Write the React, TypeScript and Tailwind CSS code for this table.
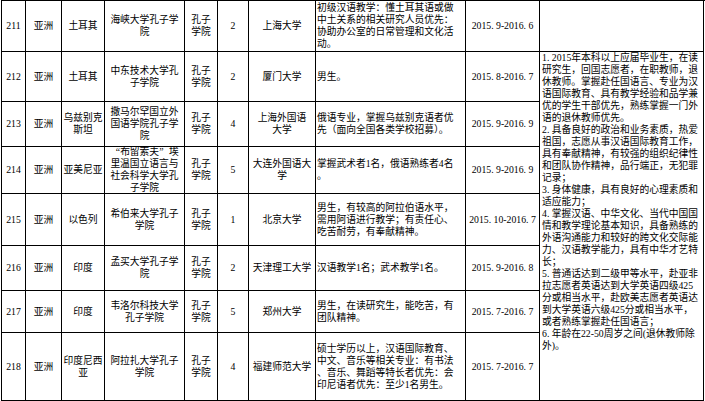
import React from "react";

type Row = {
  no: string;
  country: string;
  inst: React.ReactNode;
  n: string;
  uni: string;
  desc: string;
  date: string;
};

const Q = ({ c, right }: { c: string; right?: boolean }) => (
  <span className={right ? "inline-block w-[9.75px] text-right" : "inline-block w-[9.75px] text-left"}>{c}</span>
);

const rows: Row[] = [
  {
    no: "211",
    country: "土耳其",
    inst: "海峡大学孔子学\n院",
    n: "2",
    uni: "上海大学",
    desc: "初级汉语教学：懂土耳其语或做\n中土关系的相关研究人员优先：\n协助办公室的日常管理和文化活\n动。",
    date: "2015. 9-2016. 6",
  },
  {
    no: "212",
    country: "土耳其",
    inst: "中东技术大学孔\n子学院",
    n: "2",
    uni: "厦门大学",
    desc: "男生。",
    date: "2015. 8-2016. 7",
  },
  {
    no: "213",
    country: "乌兹别克\n斯坦",
    inst: "撒马尔罕国立外\n国语学院孔子学\n院",
    n: "4",
    uni: "上海外国语\n大学",
    desc: "俄语专业，掌握乌兹别克语者优\n先（面向全国各类学校招募）。",
    date: "2015. 9-2016. 9",
  },
  {
    no: "214",
    country: "亚美尼亚",
    inst: (
      <>
        <Q c="“" right />
        布留索夫
        <Q c="”" />
        埃{"\n"}里温国立语言与{"\n"}社会科学大学孔{"\n"}子学院
      </>
    ),
    n: "5",
    uni: "大连外国语大\n学",
    desc: "掌握武术者1名，俄语熟练者4名\n。",
    date: "2015. 9-2016. 9",
  },
  {
    no: "215",
    country: "以色列",
    inst: "希伯来大学孔子\n学院",
    n: "1",
    uni: "北京大学",
    desc: "男生，有较高的阿拉伯语水平，\n需用阿语进行教学；有责任心、\n吃苦耐劳，有奉献精神。",
    date: "2015. 10-2016. 7",
  },
  {
    no: "216",
    country: "印度",
    inst: "孟买大学孔子学\n院",
    n: "2",
    uni: "天津理工大学",
    desc: "汉语教学1名；武术教学1名。",
    date: "2015. 9-2016. 8",
  },
  {
    no: "217",
    country: "印度",
    inst: "韦洛尔科技大学\n孔子学院",
    n: "5",
    uni: "郑州大学",
    desc: "男生，在读研究生，能吃苦，有\n团队精神。",
    date: "2015. 7-2016. 7",
  },
  {
    no: "218",
    country: "印度尼西\n亚",
    inst: "阿拉扎大学孔子\n学院",
    n: "4",
    uni: "福建师范大学",
    desc: "硕士学历以上，汉语国际教育、\n中文、音乐等相关专业：有书法\n、音乐、舞蹈等特长者优先：会\n印尼语者优先：至少1名男生。",
    date: "2015. 7-2016. 7",
  },
];

const req = [
  "1. 2015年本科以上应届毕业生，在读",
  "研究生，回国志愿者，在职教师，退",
  "休教师。掌握赴任国语言、专业为汉",
  "语国际教育、具有教学经验和品学兼",
  "优的学生干部优先，熟练掌握一门外",
  "语的退休教师优先。",
  "2. 具备良好的政治和业务素质，热爱",
  "祖国，志愿从事汉语国际教育工作，",
  "具有奉献精神，有较强的组织纪律性",
  "和团队协作精神，品行端正，无犯罪",
  "记录；",
  "3. 身体健康，具有良好的心理素质和",
  "适应能力；",
  "4. 掌握汉语、中华文化、当代中国国",
  "情和教学理论基本知识，具备熟练的",
  "外语沟通能力和较好的跨文化交际能",
  "力、汉语教学能力，具有中华才艺特",
  "长；",
  "5. 普通话达到二级甲等水平，赴亚非",
  "拉志愿者英语达到大学英语四级425",
  "分或相当水平，赴欧美志愿者英语达",
  "到大学英语六级425分或相当水平，",
  "或者熟练掌握赴任国语言；",
  "6. 年龄在22-50周岁之间(退休教师除",
  "外)。",
];

const center =
  "border-r border-b border-black flex items-center justify-center text-center overflow-hidden whitespace-pre leading-[12px]";
const left =
  "border-r border-b border-black flex items-center justify-start text-left overflow-hidden whitespace-pre leading-[12px] pl-[1px]";

export default function App() {
  return (
    <div className="w-[705px] h-[401px] bg-white overflow-hidden">
      <div
        className="ml-[1px] grid grid-cols-[24px_36px_43px_80px_33px_31px_67px_150px_74px_164px] grid-rows-[51px_50px_45px_47px_52px_45px_42px_68px] border-l border-t border-black text-black text-[9.75px] w-[704px]"
        style={{ fontFamily: '"Liberation Serif", "Noto Sans CJK SC", serif' }}
      >
        {rows.map((r, i) => (
          <React.Fragment key={r.no}>
            <div className={center}>{r.no}</div>
            <div className={center}>亚洲</div>
            <div className={center}>{r.country}</div>
            <div className={center}>
              <div>{r.inst}</div>
            </div>
            <div className={center}>{"孔子\n学院"}</div>
            <div className={center}>{r.n}</div>
            <div className={center}>{r.uni}</div>
            <div className={left}>{r.desc}</div>
            <div className={center}>{r.date}</div>
            {i === 0 && <div className="border-r border-b border-black" />}
            {i === 1 && (
              <div className="row-span-7 border-r border-b border-black overflow-hidden pl-[2px] leading-[12px] whitespace-pre">
                {req.map((l, k) => (
                  <div key={k}>{l}</div>
                ))}
              </div>
            )}
          </React.Fragment>
        ))}
      </div>
    </div>
  );
}
